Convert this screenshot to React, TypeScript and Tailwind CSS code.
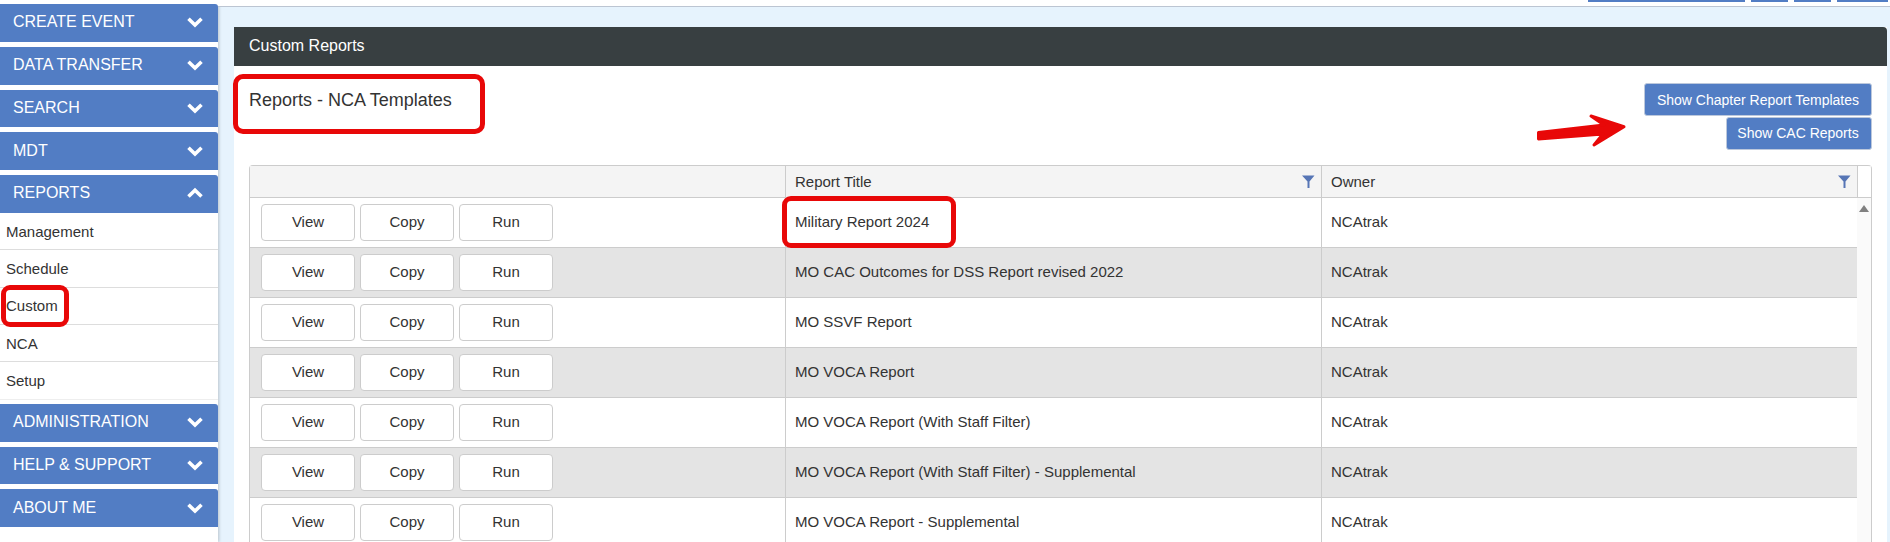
import React from 'react';

const topMenus = ['CREATE EVENT', 'DATA TRANSFER', 'SEARCH', 'MDT'];
const subMenus = ['Management', 'Schedule', 'Custom', 'NCA', 'Setup'];
const bottomMenus = ['ADMINISTRATION', 'HELP & SUPPORT', 'ABOUT ME'];

const reports = [
  'Military Report 2024',
  'MO CAC Outcomes for DSS Report revised 2022',
  'MO SSVF Report',
  'MO VOCA Report',
  'MO VOCA Report (With Staff Filter)',
  'MO VOCA Report (With Staff Filter) - Supplemental',
  'MO VOCA Report - Supplemental',
];

function Chevron({ up = false }: { up?: boolean }) {
  return (
    <svg width="16" height="12" viewBox="0 0 16 12" className="block">
      <path
        d={up ? 'M1.5 9.5 L8 3.2 L14.5 9.5' : 'M1.5 2.8 L8 9 L14.5 2.8'}
        fill="none"
        stroke="#fff"
        strokeWidth="3.6"
        strokeLinejoin="miter"
      />
    </svg>
  );
}

function MenuHeader({ label, up }: { label: string; up?: boolean }) {
  return (
    <div className="flex h-[37.75px] items-center justify-between rounded-tr-[3px] bg-[#527dc4] pb-[1px] pl-[13px] pr-[15px] text-[16px] text-white">
      <span>{label}</span>
      <Chevron up={up} />
    </div>
  );
}

function FilterIcon() {
  return (
    <svg width="13" height="13" viewBox="0 0 13 13" className="block">
      <path d="M0 0.5 H12.5 L7.5 6.5 V13 H5.5 V6.5 Z" fill="#5675b5" />
    </svg>
  );
}

function RowButton({ label }: { label: string }) {
  return (
    <button className="h-[37px] w-[94px] rounded-[4px] border border-[#ccc] bg-white text-[15px] text-[#333]">
      {label}
    </button>
  );
}

export default function App() {
  return (
    <div className="relative flex h-[542px] w-[1890px] overflow-hidden bg-[#e6f3fd] font-['Liberation_Sans',Arial,sans-serif] text-[#333]">
      {/* sidebar */}
      <aside className="flex h-full w-[218px] shrink-0 flex-col bg-white pt-[4px] shadow-[1px_0_3px_rgba(0,0,0,0.2)]">
        <div className="flex flex-col gap-[5px]">
          {topMenus.map((m) => (
            <MenuHeader key={m} label={m} />
          ))}
          <MenuHeader label="REPORTS" up />
        </div>
        <div className="mb-[4.25px] flex flex-col">
          {subMenus.map((s) => (
            <div key={s} className="flex h-[37.4px] items-center border-b border-[#ddd] pl-[6px] pt-[2px] text-[15px] last:border-[#eee]">
              {s}
            </div>
          ))}
        </div>
        <div className="flex flex-col gap-[5px]">
          {bottomMenus.map((m) => (
            <MenuHeader key={m} label={m} />
          ))}
        </div>
      </aside>

      {/* main */}
      <main className="flex min-w-0 flex-1 flex-col">
        <div className="flex h-[7px] shrink-0 items-start justify-end gap-[6px] border-b border-[#bcc5d2] bg-white pr-[2px]">
          <div className="h-[2px] w-[157px] bg-[#527dc4]" />
          <div className="h-[2px] w-[37px] bg-[#527dc4]" />
          <div className="h-[2px] w-[37px] bg-[#527dc4]" />
          <div className="h-[2px] w-[51px] bg-[#527dc4]" />
        </div>

        <div className="flex min-h-0 flex-1 flex-col pl-[16px] pr-[3px] pt-[20px]">
          <section className="flex min-h-0 flex-1 flex-col bg-white">
            <div className="flex h-[39px] shrink-0 items-center rounded-tr-[4px] bg-[#383f41] pb-[1px] pl-[15px] text-[16px] text-white">
              Custom Reports
            </div>

            <div className="flex h-[99px] shrink-0 justify-between pl-[15px] pr-[15px]">
              <h2 className="pt-[24px] text-[18px] leading-[20px]">Reports - NCA Templates</h2>
              <div className="flex flex-col items-end gap-[1px] pt-[17px]">
                <button className="h-[33px] w-[228px] rounded-[3px] border border-[#bcc8dc] bg-[#527dc4] pt-[1px] text-[14px] text-white">
                  Show Chapter Report Templates
                </button>
                <button className="h-[33px] w-[146px] rounded-[3px] border border-[#bcc8dc] bg-[#527dc4] pr-[2px] text-[14px] text-white">
                  Show CAC Reports
                </button>
              </div>
            </div>

            <div className="mx-[15px] flex-1 rounded-t-[4px] border border-b-0 border-[#ccc] text-[15px]">
              <div className="flex h-[32px] border-b border-[#ccc] bg-[#f4f4f4]">
                <div className="w-[536px] border-r border-[#ccc]" />
                <div className="flex w-[536px] items-center justify-between border-r border-[#ccc] pl-[9px] pr-[6px]">
                  <span className="pt-[1px]">Report Title</span>
                  <FilterIcon />
                </div>
                <div className="flex w-[536px] items-center justify-between border-r border-[#ccc] pl-[9px] pr-[6px]">
                  <span className="pt-[1px]">Owner</span>
                  <FilterIcon />
                </div>
                <div className="flex-1 rounded-tr-[4px] bg-white" />
              </div>

              <div className="relative flex">
                <div className="w-[1607px]">
                  {reports.map((r, i) => (
                    <div key={r} className={`flex h-[50px] border-b border-[#ccc] ${i % 2 === 1 ? 'bg-[#e4e4e4]' : 'bg-white'}`}>
                      <div className="flex w-[536px] items-center gap-[5px] border-r border-[#ccc] pl-[11px]">
                        <RowButton label="View" />
                        <RowButton label="Copy" />
                        <RowButton label="Run" />
                      </div>
                      <div className="flex w-[536px] items-center border-r border-[#ccc] pl-[9px]">{r}</div>
                      <div className="flex w-[535px] items-center pl-[9px]">NCAtrak</div>
                    </div>
                  ))}
                </div>
                <div className="flex-1 bg-[#fafafa] pt-[7px]">
                  <svg width="10" height="7" viewBox="0 0 10 7" className="mx-auto block">
                    <path d="M5 0 L10 7 H0 Z" fill="#808080" />
                  </svg>
                </div>
              </div>
            </div>
          </section>
        </div>
      </main>

      {/* red annotations drawn over the page */}
      <div className="absolute left-[233px] top-[74px] h-[60px] w-[252px] rounded-[10px] border-[5px] border-[#e80808]" />
      <div className="absolute left-[1px] top-[285px] h-[42px] w-[68px] rounded-[9px] border-[5px] border-[#e80808]" />
      <div className="absolute left-[782px] top-[196px] h-[52px] w-[174px] rounded-[9px] border-[5px] border-[#e80808]" />
      <svg className="absolute left-[1530px] top-[108px]" width="102" height="44" viewBox="0 0 102 44">
        <path
          d="M61 8 L94 18.7 L64 37 L73 26 L8.5 31 L8.5 24.5 L74 17 Z"
          fill="#e80808"
          stroke="#e80808"
          strokeWidth="3"
          strokeLinejoin="round"
        />
      </svg>
    </div>
  );
}
